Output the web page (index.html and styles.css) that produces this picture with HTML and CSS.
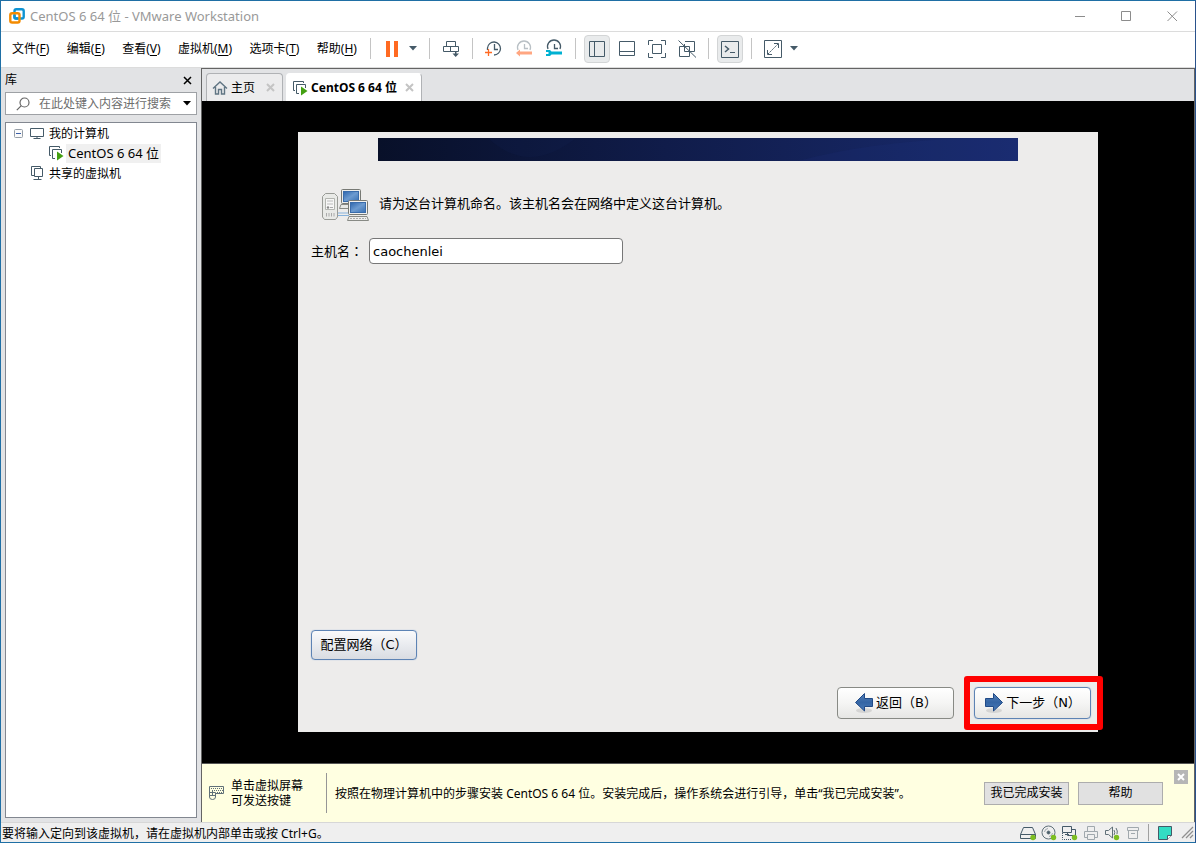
FILE: index.html
```html
<!DOCTYPE html>
<html lang="zh-CN">
<head>
<meta charset="utf-8">
<title>CentOS 6 64 位 - VMware Workstation</title>
<link rel="stylesheet" href="styles.css">
</head>
<body>
<svg class="defs" width="0" height="0" aria-hidden="true">
  <symbol id="vm-running" viewBox="0 0 16 16">
    <path d="M3 10.500H1.500V1.500H11.500V3" fill="none" stroke="#455a68"/>
    <path d="M7 13.500H4.500V4.500H13.500V8" fill="none" stroke="#455a68"/>
    <path d="M9 6.500V15.500L15.500 11Z" fill="#44a012"/>
  </symbol>
  <symbol id="arrow" viewBox="0 0 20 22">
    <defs><linearGradient id="blue" x1="0" y1="0" x2="0" y2="1"><stop offset="0" stop-color="#5580b8"/><stop offset=".5" stop-color="#3465a4"/><stop offset="1" stop-color="#4a7ab8"/></linearGradient></defs>
    <ellipse cx="10" cy="18.500" rx="8" ry="2.500" fill="#000" opacity=".1"/>
    <path d="M1.500 6.500H9.500V1.500L18.500 10.500L9.500 19V14.500H1.500Z" fill="url(#blue)" stroke="#204a87" stroke-linejoin="round"/>
  </symbol>
</svg>
<div class="window">
  <header class="titlebar">
    <svg class="logo" width="16" height="16" viewBox="0 0 16 16" fill="none" stroke-width="2.4">
      <rect x="5.500" y="1.300" width="9.200" height="9.200" rx="1.800" stroke="#0f93d2"/>
      <rect x="1.300" y="5.300" width="9.200" height="9.200" rx="1.800" stroke="#f38b00"/>
      <path d="M5.500 7V9.500Q5.500 10.500 7 10.500H9" stroke="#0f93d2"/>
    </svg>
    <h1 class="title">CentOS 6 64 位 - VMware Workstation</h1>
    <div class="window-controls">
      <button class="window-btn" aria-label="最小化"><svg width="11" height="11"><path d="M0 5.500H10" stroke="#8c8c8c"/></svg></button>
      <button class="window-btn" aria-label="最大化"><svg width="11" height="11"><path d="M.5.500H9.500V9.500H.5Z" fill="none" stroke="#8c8c8c"/></svg></button>
      <button class="window-btn" aria-label="关闭"><svg width="11" height="11"><path d="M.5.500L10 10M10 .5L.5 10" stroke="#8c8c8c"/></svg></button>
    </div>
  </header>

  <div class="commandbar">
    <nav class="menu">
      <button class="menu-item">文件(<u>F</u>)</button>
      <button class="menu-item">编辑(<u>E</u>)</button>
      <button class="menu-item">查看(<u>V</u>)</button>
      <button class="menu-item">虚拟机(<u>M</u>)</button>
      <button class="menu-item">选项卡(<u>T</u>)</button>
      <button class="menu-item">帮助(<u>H</u>)</button>
    </nav>
    <div class="toolbar">
      <div class="group tight">
        <button class="tool" aria-label="挂起"><svg width="20" height="20"><path d="M4 2h4v16H4zM12 2h4v16h-4z" fill="#ff6a22"/></svg></button>
        <button class="caret" aria-label="电源选项"><svg width="9" height="5"><path d="M0 0H8L4 4.500Z" fill="#455a68"/></svg></button>
      </div>
      <div class="group">
        <button class="tool" aria-label="发送 Ctrl+Alt+Del"><svg width="20" height="20" fill="none" stroke="#455a68"><path d="M5.500 2.500H14.500V7.500H5.500ZM2.500 7.500H9.500V12.500H2.500ZM9.500 7.500H17.500V12.500H9.500ZM14.500 12.500V17" /><path d="M14 12h1.500v2.500H18l-3.300 3.600-3.200-3.600H14z" fill="#455a68" stroke="none"/></svg></button>
      </div>
      <div class="group">
        <button class="tool" aria-label="拍摄快照"><svg width="20" height="20" fill="none" stroke="#455a68" stroke-width="1.300"><path d="M3.500 11V9A6.500 6.500 0 1 1 10 16"/><path d="M10.500 5V10.500H14"/><path d="M1 13.500H8M4.500 10V17" stroke="#ff6a22"/></svg></button>
        <button class="tool" aria-label="恢复快照"><svg width="20" height="20" fill="none" stroke="#b9c0c5" stroke-width="1.300"><path d="M4 11A6.500 6.500 0 1 1 16 11"/><path d="M10.500 5V9.500H14"/><path d="M2 14L6 10.500V12.500H18V15.500H6V17.500Z" fill="#ffa681" stroke="none"/></svg></button>
        <button class="tool" aria-label="管理快照"><svg width="20" height="20" fill="none" stroke="#455a68" stroke-width="1.300"><path d="M4 10A6.500 6.500 0 1 1 16 10"/><path d="M10.500 5V9.500H14"/><path d="M2 11H6L7.500 12.500H18V15.500H7.500L6 17H2V15H4.500V13H2Z" fill="#00b1d2" stroke="none"/></svg></button>
      </div>
      <div class="group">
        <button class="tool pressed" aria-label="库"><svg width="20" height="20" fill="none" stroke="#455a68"><path d="M2.500 2.500H17.500V17.500H2.500ZM7.500 2.500V17.500"/></svg></button>
        <button class="tool" aria-label="缩略图栏"><svg width="20" height="20" fill="none" stroke="#455a68"><path d="M2.500 2.500H17.500V16.500H2.500ZM2.500 12.500H17.500"/></svg></button>
        <button class="tool" aria-label="全屏"><svg width="20" height="20" fill="none" stroke="#455a68"><path d="M1.500 6V1.500H6M14 1.500H18.500V6M18.500 14V18.500H14M6 18.500H1.500V14M5.500 5.500H14.500V14.500H5.500Z"/></svg></button>
        <button class="tool" aria-label="Unity"><svg width="20" height="20" fill="none" stroke="#455a68"><path d="M8 2.500H17.500V12.500H14M12.500 7.500H2.500V17.500H12.500V7.500M7.500 5V12.500H14M1.500 1.500L19 18.500"/></svg></button>
      </div>
      <div class="group">
        <button class="tool pressed" aria-label="控制台视图"><svg width="20" height="20" fill="none" stroke="#455a68"><path d="M1.500 2.500H18.500V18.500H1.500Z"/><path d="M5 7L8.500 10L5 13" stroke-width="1.500"/><path d="M10 13.500H15"/></svg></button>
      </div>
      <div class="group tight">
        <button class="tool" aria-label="自由拉伸"><svg width="20" height="20" fill="none" stroke="#455a68"><path d="M1.500 1.500H18.500V18.500H1.500Z"/><path d="M11 4.500H15.500V9M4.500 11V15.500H9"/><path d="M5 15L15 5" stroke-dasharray="2 1"/></svg></button>
        <button class="caret" aria-label="拉伸选项"><svg width="9" height="5"><path d="M0 0H8L4 4.500Z" fill="#455a68"/></svg></button>
      </div>
    </div>
  </div>

  <div class="workspace">
    <aside class="library">
      <div class="library-head">
        <h2 class="library-title">库</h2>
        <button class="plain" aria-label="关闭库"><svg width="9" height="9"><path d="M1 1L8 8M8 1L1 8" stroke="#000" stroke-width="1.500"/></svg></button>
      </div>
      <div class="search">
        <svg width="14" height="14" fill="none" stroke="#666" stroke-width="1.200"><circle cx="8.500" cy="5.500" r="4.500"/><path d="M5.300 8.700L.8 13.200"/></svg>
        <input class="search-input" type="text" placeholder="在此处键入内容进行搜索" aria-label="搜索">
        <button class="plain search-caret" aria-label="搜索选项"><svg width="8" height="5"><path d="M0 0H8L4 4.500Z" fill="#000"/></svg></button>
      </div>
      <ul class="tree">
        <li>
          <div class="node">
            <button class="plain" aria-label="折叠"><svg width="9" height="9" fill="none"><rect x=".5" y=".5" width="8" height="8" rx="1" stroke="#959da6" fill="#fafafa"/><path d="M2 4.500H7" stroke="#3b5fa8"/></svg></button>
            <svg class="node-icon" width="16" height="16" fill="none" stroke="#455a68"><path d="M1.500 3.500H14.500V11.500H1.500ZM8 11.500V13.500M4.500 13.500H11.500"/></svg>
            <span class="node-label">我的计算机</span>
          </div>
          <ul class="subtree">
            <li class="node">
              <svg class="node-icon" width="16" height="16"><use href="#vm-running"/></svg>
              <span class="node-label selected">CentOS 6 64 位</span>
            </li>
          </ul>
        </li>
        <li class="node shared">
          <svg class="node-icon" width="16" height="16" fill="none" stroke="#455a68"><path d="M5.500 10.500H2.500V1.500H11.500V3.500M5.500 3.500H13.500V11.500H5.500ZM9.500 11.500V14.500M4.500 14.500H12.500"/></svg>
          <span class="node-label">共享的虚拟机</span>
        </li>
      </ul>
    </aside>

    <main class="machine">
      <div class="tabs">
        <div class="tab">
          <svg width="16" height="16" fill="none" stroke="#607583" stroke-width="1.400"><path d="M1 8.500L8 2L15 8.500M3.500 7V14H6.500V9.500H9.500V14H12.500V7"/></svg>
          <a class="tab-name" href="#home">主页</a>
          <button class="plain tab-close" aria-label="关闭主页"><svg width="9" height="9"><path d="M1 1L8 8M8 1L1 8" stroke="#c4c4c4" stroke-width="2"/></svg></button>
        </div>
        <div class="tab active">
          <svg width="16" height="16"><use href="#vm-running"/></svg>
          <a class="tab-name" href="#console">CentOS 6 64 位</a>
          <button class="plain tab-close" aria-label="关闭 CentOS 6 64 位"><svg width="9" height="9"><path d="M1 1L8 8M8 1L1 8" stroke="#c4c4c4" stroke-width="2"/></svg></button>
        </div>
      </div>

      <section class="console" id="console">
        <div class="guest">
          <svg class="banner" viewBox="0 0 640 23" preserveAspectRatio="none">
            <defs><linearGradient id="night"><stop offset="0" stop-color="#081029"/><stop offset=".45" stop-color="#101c4a"/><stop offset="1" stop-color="#192b6e"/></linearGradient></defs>
            <rect width="640" height="23" fill="url(#night)"/>
            <path d="M110 0Q150 38 198 0Z" fill="#162760" opacity=".12"/>
            <path d="M420 23Q490 4 590 0H640V23Z" fill="#203783" opacity=".15"/>
          </svg>
          <div class="intro">
            <svg width="48" height="36" viewBox="0 0 48 36">
              <defs><linearGradient id="screen" x1="0" y1="0" x2="1" y2="1"><stop offset="0" stop-color="#2d65ad"/><stop offset=".5" stop-color="#6d9bd0"/><stop offset="1" stop-color="#3970b3"/></linearGradient></defs>
              <path d="M16 25H28M16 27.500H28" stroke="#87b2dc"/>
              <path d="M20 16.500H36L37.500 20.500H18.500Z" fill="#e8e9e6" stroke="#888a85"/>
              <rect x="20.500" y="1.500" width="19" height="14" rx="1" fill="#eeeeec" stroke="#777974"/>
              <rect x="22.500" y="3.500" width="15" height="10" fill="url(#screen)" stroke="#3a6cab"/>
              <path d="M4.500 5.500H13.500L16.500 8.500V29L14.500 31.500H3.500L1.500 29V8.500Z" fill="#e9eae7" stroke="#999b96"/>
              <path d="M4.500 10.500H13.500V21.500H4.500Z" fill="#f7f7f6" stroke="#b3b5b0"/>
              <path d="M6 13H12M6 16H12" stroke="#bbb"/><circle cx="7" cy="19.500" r="1.200" fill="#888"/><path d="M9 19.500H12M5.500 25V28.500M8 25V28.500M10.500 25V28.500M13 25V28.500" stroke="#aaa"/>
              <rect x="27.500" y="12.500" width="19" height="14" rx="1" fill="#f1f1ef" stroke="#777974"/>
              <rect x="29.500" y="14.500" width="15" height="10" fill="url(#screen)" stroke="#3a6cab"/>
              <path d="M28 28.500H46L47.500 32.500H26.500Z" fill="#eeeeec" stroke="#888a85"/><path d="M29 30.500H45" stroke="#aaa" stroke-dasharray="2 1"/>
            </svg>
            <p class="intro-text">请为这台计算机命名。该主机名会在网络中定义这台计算机。</p>
          </div>
          <div class="field">
            <label class="hostname-label" for="hostname">主机名<span lang="zh-Hant">：</span></label>
            <input class="hostname" id="hostname" type="text" value="caochenlei">
          </div>
          <button class="guest-btn focus network">配置网络（C）</button>
          <div class="wizard">
            <button class="guest-btn nav-btn"><svg class="back-arrow" width="20" height="22"><use href="#arrow"/></svg>返回（B）</button>
            <div class="next">
              <button class="guest-btn nav-btn focus"><svg width="20" height="22"><use href="#arrow"/></svg>下一步（N）</button>
              <span class="highlight"></span>
            </div>
          </div>
        </div>
      </section>

      <section class="hint">
        <svg width="15" height="16" fill="none" stroke="#607078"><path d="M.5 1.500H14.500V8.500H7M.5 8.500V1.500"/><path d="M2 3.500H13M3 5.500H14M8 7.500H13" stroke-dasharray="1 1"/><path d="M.5 7.500H6.500V12Q6.500 14.500 3.500 14.500T.5 12ZM3.500 5.500V10.500M.5 10.500H6.500"/></svg>
        <p class="hint-input">单击虚拟屏幕<br>可发送按键</p>
        <p class="hint-text">按照在物理计算机中的步骤安装 CentOS 6 64 位。安装完成后，操作系统会进行引导，单击“我已完成安装”。</p>
        <div class="hint-actions">
          <button class="hint-btn">我已完成安装</button>
          <button class="hint-btn">帮助</button>
        </div>
        <button class="hint-close" aria-label="关闭提示"><svg width="8" height="8"><path d="M1 1L7 7M7 1L1 7" stroke="#fff" stroke-width="2"/></svg></button>
      </section>
    </main>
  </div>

  <footer class="status">
    <p class="status-text">要将输入定向到该虚拟机，请在虚拟机内部单击或按 Ctrl+G。</p>
    <div class="devices">
      <svg width="16" height="16" fill="none" stroke="#455a68"><path d="M3.500 2.500H12.500L15.500 9.500V13.500H.5V9.500ZM.5 9.500H15.500"/><circle cx="13" cy="12.500" r="2.700" fill="#7dbe22" stroke="none"/></svg>
      <svg width="16" height="16" fill="none" stroke="#607078"><circle cx="7.500" cy="7.500" r="6.500"/><circle cx="7.500" cy="7.500" r="1.500" fill="#455a68"/><path d="M3.500 7A4 4 0 0 1 7 3.500M11.500 8A4 4 0 0 1 8 11.500" stroke="#a0a8ad"/><circle cx="12.500" cy="12.500" r="2.700" fill="#7dbe22" stroke="none"/></svg>
      <svg width="16" height="16" fill="none" stroke="#455a68"><path d="M.5 1.500H9.500V7.500H.5ZM9.500 4.500H13.500V10.500H5.500V7.500M3 9.500H7"/><path d="M.5 8V14.500H10" stroke-dasharray="1 1"/><circle cx="12.500" cy="12.500" r="2.700" fill="#7dbe22" stroke="none"/></svg>
      <svg width="16" height="16" fill="none" stroke="#a0a8ad"><path d="M4.500 6V1.500H11.500V6M4 12.500H1.500V6.500H14.500V12.500H12M4.500 9.500H11.500V14.500H4.500Z"/></svg>
      <svg width="16" height="16" fill="none" stroke="#607078"><path d="M1.500 5.500H4.500L8.500 2V13L4.500 9.500H1.500ZM10 5Q11.500 7.500 10 10M12 3Q14 6 13 9"/><circle cx="12.500" cy="12.500" r="2.700" fill="#7dbe22" stroke="none"/></svg>
      <svg width="16" height="16" fill="none" stroke="#a0a8ad"><path d="M2.500 2.500H13.500V5.500H2.500ZM3.500 5.500V13.500H12.500V5.500M6 8.500H10"/></svg>
      <span class="status-rule"></span>
      <svg class="message" width="16" height="16"><path d="M1.500 1.500H14.500V10.500L10.500 14.500H1.500Z" fill="#33ddc4" stroke="#455a68"/><path d="M10.500 14.500V10.500H14.500" fill="#fff" stroke="#455a68"/></svg>
      <svg class="grip" width="13" height="13"><path d="M1 12L12 1M5 12L12 5M9 12L12 9" stroke="#909090" stroke-width="1.300"/></svg>
    </div>
  </footer>
</div>
</body>
</html>
```
FILE: styles.css
```css
* { box-sizing: border-box; }
body {
  margin: 0;
  font: 12px/16px "Noto Sans", "Noto Sans CJK SC", sans-serif;
  color: #000;
}
button, input { font: inherit; color: inherit; margin: 0; padding: 0; }
button { border: 0; background: none; }
svg { display: block; flex: none; }
p, h1, h2, ul { margin: 0; padding: 0; font-size: 12px; font-weight: 400; list-style: none; }
.defs { position: absolute; }
.plain { display: flex; align-items: center; justify-content: center; }

.window {
  min-height: 100vh;
  display: flex;
  flex-direction: column;
  border: 1px solid #1f6fa5;
  border-right-color: #2a528c;
  background: #efefef;
}

.titlebar { display: flex; align-items: center; height: 30px; padding-left: 8px; background: #fff; }
.title { flex: 1; margin-left: 5px; color: #999; font-size: 13px; }
.window-controls { display: flex; }
.window-btn { display: flex; align-items: center; justify-content: center; width: 46px; height: 30px; }

.commandbar {
  display: flex;
  align-items: center;
  height: 37px;
  padding-bottom: 2px;
  border-top: 1px solid #dcdcdc;
  border-bottom: 1px solid #dcdcdc;
  background: #fff;
}
.menu { display: flex; justify-content: space-between; width: 345px; margin: 0 13px 0 11px; }
.menu-item { white-space: nowrap; }
.menu-item u { text-underline-offset: 2px; }
.toolbar { display: flex; align-items: center; }
.group { display: flex; align-items: center; gap: 4px; }
.group::before { content: ""; width: 1px; height: 21px; margin-right: 4px; background: #c4c4c4; }
.group.tight { gap: 0; }
.group.tight::before { margin-right: 8px; }
.group + .group { margin-left: 8px; }
.tool { display: flex; align-items: center; justify-content: center; width: 26px; height: 28px; border-radius: 4px; }
.tool.pressed { border: 1px solid #d3d5d6; background: #e9ebec; }
.caret { display: flex; align-items: center; justify-content: center; width: 16px; height: 28px; }

.workspace { flex: 1; display: flex; background: #e2e3e5; }
.library { display: flex; flex-direction: column; width: 200px; padding: 0 4px 4px; }
.library-head { display: flex; align-items: center; justify-content: space-between; height: 24px; padding-right: 5px; }
.search {
  display: flex;
  align-items: center;
  gap: 9px;
  height: 23px;
  margin-bottom: 7px;
  padding: 0 5px 0 10px;
  border: 1px solid #9ea1a5;
  background: #fff;
}
.search-input { flex: 1; min-width: 0; border: 0; outline: 0; background: none; }
.search-input::placeholder { color: #6d6d6d; opacity: 1; }
.tree { flex: 1; padding: 0 0 0 8px; border: 1px solid #828790; background: #fff; }
.node { display: flex; align-items: center; height: 20px; }
.node .plain { margin-right: 6px; }
.node-icon { margin-right: 2px; }
.node-label { padding: 0 2px; line-height: 19px; white-space: nowrap; }
.node-label.selected { background: #f0f0f0; font-size: 13px; }
.subtree { padding-left: 34px; }
.shared { padding-left: 15px; }

.machine {
  flex: 1;
  min-width: 0;
  display: flex;
  flex-direction: column;
  border: 1px solid #646464;
  border-bottom: 0;
}
.tabs { display: flex; align-items: flex-end; gap: 3px; height: 32px; padding-left: 4px; }
.tab {
  display: flex;
  align-items: center;
  height: 28px;
  padding: 0 7px 0 5px;
  border: 1px solid #b0b2b5;
  border-bottom: 0;
  border-radius: 4px 4px 0 0;
  background: #ececed;
}
.tab.active { background: #fff; border-color: #fff #b0b2b5 #fff #fff; font-weight: 700; }
.tab-name { margin: 0 11px 0 3px; color: #000; text-decoration: none; white-space: nowrap; }
.active .tab-name { margin-right: 8px; }

.console { flex: 1; display: flex; align-items: center; justify-content: center; background: #000; }
.guest {
  display: flex;
  flex-direction: column;
  align-items: flex-start;
  width: 100%;
  max-width: 800px;
  min-height: 600px;
  padding: 6px 7px 13px 13px;
  background: #edeceb;
  font: 13px/18px "DejaVu Sans", "Noto Sans CJK SC", sans-serif;
}
.banner { width: 640px; max-width: 100%; height: 23px; margin-left: 67px; }
.intro { display: flex; align-items: flex-start; gap: 10px; margin: 27px 0 14px 10px; }
.intro-text { font-size: 13px; padding-top: 7px; }
.field { display: flex; align-items: center; gap: 6px; }
.hostname-label { font-family: "Noto Sans CJK SC", sans-serif; }
.hostname-label span { font-family: "Noto Sans CJK TC", sans-serif; }
.hostname { width: 254px; height: 26px; padding: 0 3px; border: 1px solid #777; border-radius: 4px; background: #fff; font-size: 13px; }
.guest-btn {
  display: flex;
  align-items: center;
  justify-content: center;
  border: 1px solid #888a85;
  border-radius: 4px;
  background: linear-gradient(#fff, #f5f5f4 50%, #e6e6e4);
}
.guest-btn.focus { border-color: #5d83b4; box-shadow: 0 0 1px #7da3d2; }
.network { width: 106px; height: 30px; margin: auto 0 27px; background: linear-gradient(#fafafb, #e9ebef 50%, #d9dce2); }
.wizard { display: flex; align-self: flex-end; gap: 20px; }
.nav-btn { gap: 2px; width: 117px; height: 32px; }
.back-arrow { transform: scaleX(-1); }
.next { position: relative; }
.highlight { position: absolute; inset: -11px -12px -11px -10px; border: 6px solid #f00; border-radius: 3px; pointer-events: none; }

.hint {
  position: relative;
  display: flex;
  align-items: center;
  min-height: 59px;
  padding: 0 31px 0 7px;
  border-top: 1px solid #555;
  background: #ffffe1;
}
.hint-input { margin: 0 0 0 7px; padding: 5px 23px 5px 0; border-right: 1px solid #969696; line-height: 15px; white-space: nowrap; }
.hint-text { flex: 1; margin-left: 8px; padding-top: 2px; }
.hint-actions { display: flex; gap: 9px; }
.hint-btn { width: 85px; height: 23px; border: 1px solid #adadad; background: #e1e1e1; white-space: nowrap; }
.hint-close {
  position: absolute;
  top: 6px;
  right: 6px;
  display: flex;
  align-items: center;
  justify-content: center;
  width: 14px;
  height: 14px;
  background: #b6b6b6;
}

.status { display: flex; align-items: center; justify-content: space-between; height: 20px; padding: 0 1px; border-top: 1px solid #d7d7d7; }
.status-text { padding-top: 2px; }
.devices { display: flex; align-items: center; gap: 5px; }
.status-rule { width: 1px; height: 17px; margin: 0 3px 0 2px; background: #a0a0a0; }
.grip { margin-left: 3px; }
```
